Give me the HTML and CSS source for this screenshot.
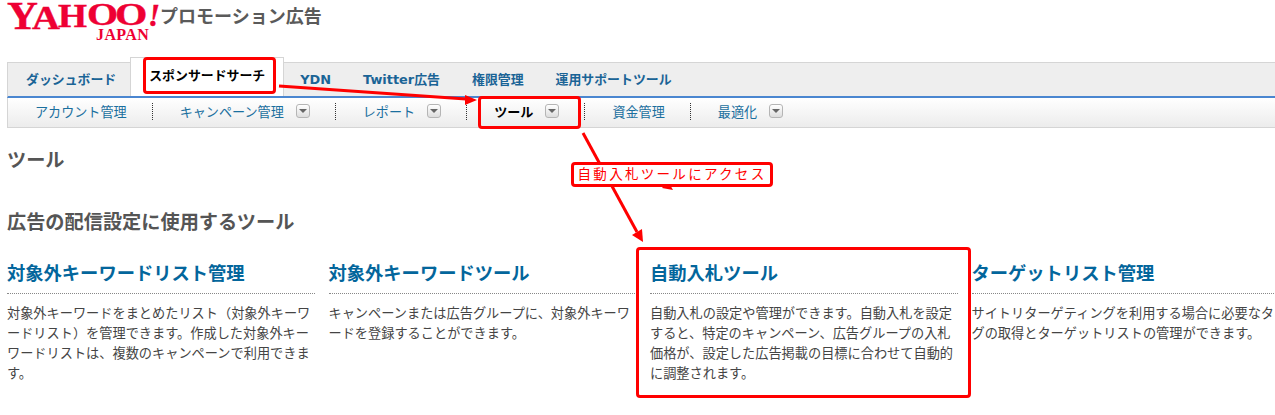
FILE: index.html
```html
<!DOCTYPE html>
<html lang="ja">
<head>
    <meta charset="UTF-8">
    <title>ツール</title>
    <link rel="stylesheet" href="styles.css">
</head>
<body>
    <header class="site-header">
        <div class="logo">
            <div class="logo-main"><span class="l-y">Y</span><span class="l-a">A</span><span class="l-h">H</span><span class="l-o">O</span><span class="l-o2">O</span><i>!</i></div>
            <div class="logo-sub">JAPAN</div>
        </div>
        <div class="site-name">プロモーション広告</div>
    </header>

    <nav class="tabs">
        <a class="tab">ダッシュボード</a>
        <a class="tab active">スポンサードサーチ</a>
        <a class="tab">YDN</a>
        <a class="tab">Twitter広告</a>
        <a class="tab">権限管理</a>
        <a class="tab">運用サポートツール</a>
    </nav>
    <nav class="subnav">
        <div class="sub-item"><a>アカウント管理</a></div>
        <div class="sub-item"><a>キャンペーン管理</a><span class="drop"></span></div>
        <div class="sub-item"><a>レポート</a><span class="drop"></span></div>
        <div class="sub-item current"><a>ツール</a><span class="drop"></span></div>
        <div class="sub-item"><a>資金管理</a></div>
        <div class="sub-item"><a>最適化</a><span class="drop"></span></div>
    </nav>

    <main class="content">
        <h1>ツール</h1>
        <h2>広告の配信設定に使用するツール</h2>
        <div class="tool-list">
            <section class="tool-card">
                <h3>対象外キーワードリスト管理</h3>
                <p>対象外キーワードをまとめたリスト（対象外キーワードリスト）を管理できます。作成した対象外キーワードリストは、複数のキャンペーンで利用できます。</p>
            </section>
            <section class="tool-card">
                <h3>対象外キーワードツール</h3>
                <p>キャンペーンまたは広告グループに、対象外キーワードを登録することができます。</p>
            </section>
            <section class="tool-card">
                <h3>自動入札ツール</h3>
                <p>自動入札の設定や管理ができます。自動入札を設定すると、特定のキャンペーン、広告グループの入札価格が、設定した広告掲載の目標に合わせて自動的に調整されます。</p>
            </section>
            <section class="tool-card">
                <h3>ターゲットリスト管理</h3>
                <p>サイトリターゲティングを利用する場合に必要なタグの取得とターゲットリストの管理ができます。</p>
            </section>
        </div>
    </main>

    <!-- annotations drawn over the page -->
    <div class="mark mark-tab"></div>
    <div class="mark mark-tool"></div>
    <div class="mark mark-card"></div>
    <svg class="arrows" width="1275" height="415" viewBox="0 0 1275 415">
        <g stroke="#f00" stroke-width="3" fill="none">
            <path d="M279 86L466 99"/>
            <path d="M583 133L637 232"/>
        </g>
        <g fill="#f00">
            <path d="M477 100L465 95V105Z"/>
            <path d="M643 242L632 235L642 229Z"/>
            <path d="M662 188L668 181L673 190Z"/>
        </g>
    </svg>
    <div class="callout">自動入札ツールにアクセス</div>
</body>
</html>
```

FILE: styles.css
```css
body {
    margin: 0;
    width: 1275px;
    height: 415px;
    overflow: hidden;
    position: relative;
    background: #fff;
    color: #444;
    font-family: "Liberation Sans", "Noto Sans CJK JP", sans-serif;
}

/* Header */
.site-header {
    display: flex;
    height: 57px;
    padding-left: 7px;
    box-sizing: border-box;
}
.logo {
    width: 153px;
    padding-top: 1px;
    box-sizing: border-box;
    color: #ee0033;
    font-family: "Liberation Serif", serif;
    font-weight: bold;
}
.logo-main {
    display: flex;
    align-items: baseline;
    height: 26px;
    line-height: 30px;
    -webkit-text-stroke: 0.4px #ee0033;
}
.logo-main span, .logo-main i {
    display: inline-block;
    transform-origin: left bottom;
}
.l-y { width: 25px; font-size: 40px; transform: scaleX(1.07); }
.l-a { width: 26px; font-size: 33px; transform: scaleX(1.17); }
.l-h { width: 29px; font-size: 33px; transform: translateY(-2px) scaleX(1.13); }
.l-o { width: 28px; font-size: 32px; transform: translateY(-4px) scaleX(1.25); }
.l-o2 { width: 33px; font-size: 32px; transform: translateY(-4px) scaleX(1.3); }
.logo-main i { font-size: 31px; line-height: 20px; transform: translateY(-3px); }
.logo-sub {
    margin: 1px 0 0 89px;
    font-size: 16px;
    line-height: 13px;
    letter-spacing: 0.4px;
}
.site-name {
    margin-top: 4px;
    font-size: 18px;
    line-height: 26px;
    font-weight: bold;
    color: #5a5a5a;
}

/* Tabs */
.tabs {
    display: flex;
    height: 33px;
    margin: 5px 0 0 7px;
    padding-left: 2px;
    background: #eee;
    border: 1px solid #d5d5d5;
    border-width: 1px 0 0 1px;
    border-bottom: 2px solid #4a86d0;
    font-family: "DejaVu Sans", "Noto Sans CJK JP", sans-serif;
}
.tab {
    padding: 0 16px;
    font-size: 12.9px;
    font-weight: bold;
    line-height: 33px;
    color: #1a6496;
    white-space: nowrap;
}
.tab:first-child { padding-right: 14px; }
.tab.active {
    margin: -6px 0 -2px 0;
    padding: 0 18px;
    height: 39px;
    line-height: 36px;
    box-sizing: border-box;
    background: #fff;
    border: 1px solid #d5d5d5;
    border-bottom: 0;
    color: #000;
}

/* Sub navigation */
.subnav {
    display: flex;
    align-items: center;
    height: 26px;
    padding-bottom: 3px;
    margin-left: 7px;
    background: linear-gradient(#fff, #ececec);
    border-left: 1px solid #d5d5d5;
    border-bottom: 1px solid #d5d5d5;
    font-size: 13.1px;
    color: #1a6f9e;
}
.sub-item {
    display: flex;
    align-items: center;
    height: 17px;
    padding: 0 25px 0 27px;
    border-right: 1px dotted #333;
    white-space: nowrap;
}
.sub-item:last-child { border-right: 0; }
.sub-item.current {
    color: #000;
    font-weight: bold;
}
.drop {
    display: inline-block;
    position: relative;
    width: 14px;
    height: 14px;
    margin-left: 12px;
    box-sizing: border-box;
    background: linear-gradient(#fff, #ddd);
    border: 1px solid #b5b5b5;
    border-radius: 3px;
}
.drop::after {
    content: "";
    position: absolute;
    left: 2px;
    top: 4px;
    border: 4px solid transparent;
    border-top: 4px solid #666;
    border-bottom: 0;
}

/* Content */
.content {
    padding-left: 7px;
}
h1, h2 {
    margin: 0;
    font-size: 19.2px;
    font-weight: bold;
    color: #555;
    line-height: 28px;
}
h1 { margin-top: 19px; }
h2 { margin-top: 34px; }
.tool-list {
    display: grid;
    grid-template-columns: repeat(4, 308px);
    column-gap: 13.5px;
    margin-top: 23px;
}
.tool-card h3 {
    margin: 0;
    padding-bottom: 5px;
    border-bottom: 1px dotted #888;
    font-size: 18.3px;
    font-weight: bold;
    line-height: 28px;
    color: #03669c;
    white-space: nowrap;
}
.tool-card p {
    margin: 10px 0 0;
    font-size: 13.2px;
    line-height: 20px;
    color: #444;
}

/* Red annotations */
.mark {
    position: absolute;
    border: 3px solid #f00;
    border-radius: 4px;
    box-sizing: border-box;
}
.mark-tab { left: 143px; top: 57px; width: 133px; height: 37px; }
.mark-tool { left: 478px; top: 96px; width: 103px; height: 33px; }
.mark-card { left: 636px; top: 247px; width: 335px; height: 151px; }
.arrows {
    position: absolute;
    left: 0;
    top: 0;
}
.callout {
    position: absolute;
    left: 571px;
    top: 162px;
    width: 202px;
    height: 25px;
    box-sizing: border-box;
    border: 3px solid #f00;
    border-radius: 4px;
    background: #fff;
    color: #f00;
    font-size: 13.5px;
    line-height: 19px;
    letter-spacing: 2.3px;
    text-align: center;
    white-space: nowrap;
}
```
